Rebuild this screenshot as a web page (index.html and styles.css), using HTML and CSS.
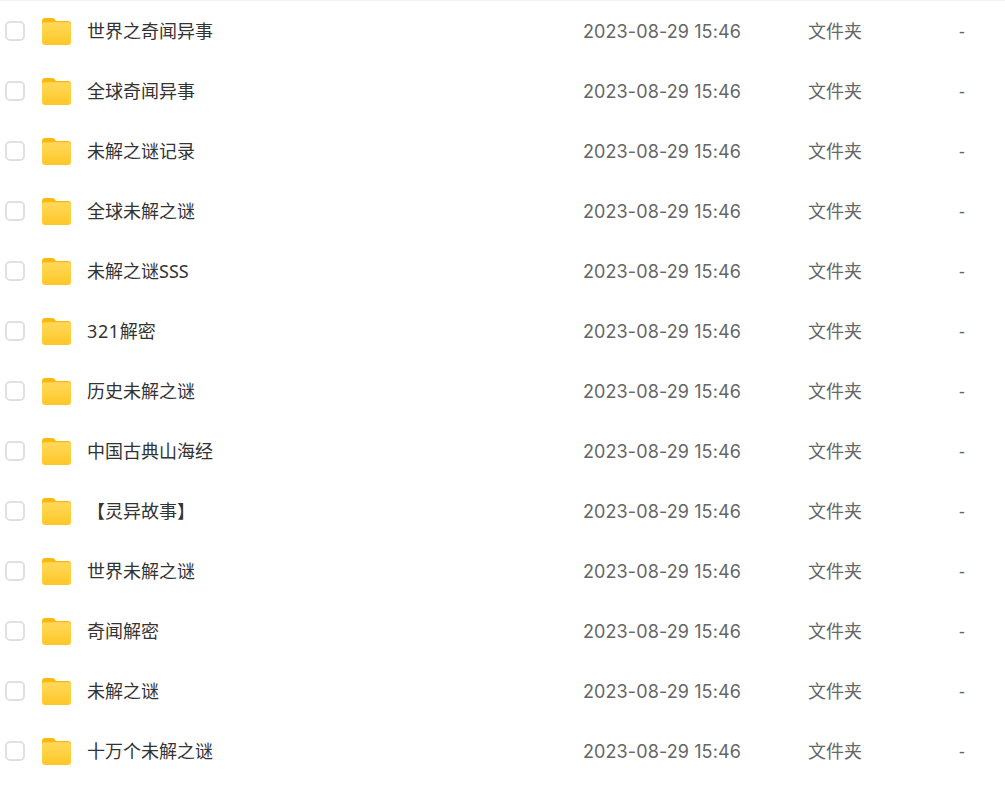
FILE: index.html
```html
<!DOCTYPE html>
<html>
<head>
	<meta charset="UTF-8">
	<title>文件列表</title>
	<link rel="stylesheet" href="styles.css">
</head>
<body>
	<svg class="sprite" width="0" height="0">
		<defs>
			<linearGradient id="folderFront" x1="0" y1="0" x2="0" y2="1">
				<stop offset="0" stop-color="#ffd95a"/>
				<stop offset="1" stop-color="#ffc727"/>
			</linearGradient>
			<symbol id="folder" viewBox="0 0 30 28">
				<path d="M0 3a3 3 0 0 1 3-3h7.5c1 0 1.8.4 2.4 1.1L14.500 3H27a3 3 0 0 1 3 3v6H0z" fill="#ffb80f"/>
				<path d="M0 7a2.500 2.500 0 0 1 2.500-2.500h25A2.500 2.500 0 0 1 30 7v18a3 3 0 0 1-3 3H3a3 3 0 0 1-3-3z" fill="url(#folderFront)"/>
			</symbol>
		</defs>
	</svg>

	<div class="file-list">
		<div class="file-row">
			<span class="check"></span>
			<svg class="folder"><use href="#folder"/></svg>
			<span class="name">世界之奇闻异事</span>
			<span class="date">2023-08-29 15:46</span>
			<span class="type">文件夹</span>
			<span class="size">-</span>
		</div>
		<div class="file-row">
			<span class="check"></span>
			<svg class="folder"><use href="#folder"/></svg>
			<span class="name">全球奇闻异事</span>
			<span class="date">2023-08-29 15:46</span>
			<span class="type">文件夹</span>
			<span class="size">-</span>
		</div>
		<div class="file-row">
			<span class="check"></span>
			<svg class="folder"><use href="#folder"/></svg>
			<span class="name">未解之谜记录</span>
			<span class="date">2023-08-29 15:46</span>
			<span class="type">文件夹</span>
			<span class="size">-</span>
		</div>
		<div class="file-row">
			<span class="check"></span>
			<svg class="folder"><use href="#folder"/></svg>
			<span class="name">全球未解之谜</span>
			<span class="date">2023-08-29 15:46</span>
			<span class="type">文件夹</span>
			<span class="size">-</span>
		</div>
		<div class="file-row">
			<span class="check"></span>
			<svg class="folder"><use href="#folder"/></svg>
			<span class="name">未解之谜SSS</span>
			<span class="date">2023-08-29 15:46</span>
			<span class="type">文件夹</span>
			<span class="size">-</span>
		</div>
		<div class="file-row">
			<span class="check"></span>
			<svg class="folder"><use href="#folder"/></svg>
			<span class="name"><span class="digits">321</span>解密</span>
			<span class="date">2023-08-29 15:46</span>
			<span class="type">文件夹</span>
			<span class="size">-</span>
		</div>
		<div class="file-row">
			<span class="check"></span>
			<svg class="folder"><use href="#folder"/></svg>
			<span class="name">历史未解之谜</span>
			<span class="date">2023-08-29 15:46</span>
			<span class="type">文件夹</span>
			<span class="size">-</span>
		</div>
		<div class="file-row">
			<span class="check"></span>
			<svg class="folder"><use href="#folder"/></svg>
			<span class="name">中国古典山海经</span>
			<span class="date">2023-08-29 15:46</span>
			<span class="type">文件夹</span>
			<span class="size">-</span>
		</div>
		<div class="file-row">
			<span class="check"></span>
			<svg class="folder"><use href="#folder"/></svg>
			<span class="name">【灵异故事】</span>
			<span class="date">2023-08-29 15:46</span>
			<span class="type">文件夹</span>
			<span class="size">-</span>
		</div>
		<div class="file-row">
			<span class="check"></span>
			<svg class="folder"><use href="#folder"/></svg>
			<span class="name">世界未解之谜</span>
			<span class="date">2023-08-29 15:46</span>
			<span class="type">文件夹</span>
			<span class="size">-</span>
		</div>
		<div class="file-row">
			<span class="check"></span>
			<svg class="folder"><use href="#folder"/></svg>
			<span class="name">奇闻解密</span>
			<span class="date">2023-08-29 15:46</span>
			<span class="type">文件夹</span>
			<span class="size">-</span>
		</div>
		<div class="file-row">
			<span class="check"></span>
			<svg class="folder"><use href="#folder"/></svg>
			<span class="name">未解之谜</span>
			<span class="date">2023-08-29 15:46</span>
			<span class="type">文件夹</span>
			<span class="size">-</span>
		</div>
		<div class="file-row">
			<span class="check"></span>
			<svg class="folder"><use href="#folder"/></svg>
			<span class="name">十万个未解之谜</span>
			<span class="date">2023-08-29 15:46</span>
			<span class="type">文件夹</span>
			<span class="size">-</span>
		</div>
	</div>
</body>
</html>
```

FILE: styles.css
```css
html, body {
	height: 100%;
}

body {
	margin: 0;
	background-color: #fff;
	color: #333;
	font-family: "Noto Sans", "Noto Sans CJK SC", sans-serif;
	font-size: 18px;
	overflow: hidden;
}

.sprite {
	display: block;
	height: 0;
}

.file-list {
	border-top: 1px solid #f2f2f2;
}

.file-row {
	display: grid;
	grid-template-columns: 20px 30px 1fr 225px 151px 46px;
	align-items: center;
	height: 60px;
	padding-left: 5px;
}

.check {
	width: 20px;
	height: 20px;
	box-sizing: border-box;
	border: 2px solid #e0e0e0;
	border-radius: 5px;
	background-color: #fff;
}

.folder {
	width: 29px;
	height: 27px;
	margin-left: 17px;
}

.name {
	margin-left: 32px;
	margin-bottom: 2px;
	color: #333;
}

.digits {
	letter-spacing: 0.6px;
}

.date {
	color: #666;
	font-family: "Inter", "Noto Sans", sans-serif;
	letter-spacing: 0.1px;
	white-space: nowrap;
}

.type {
	margin-bottom: 2px;
	color: #666;
}

.size {
	color: #666;
}
```
